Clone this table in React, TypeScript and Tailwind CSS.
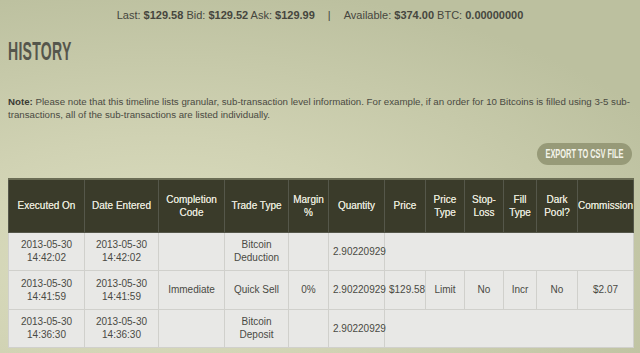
const cols = [76, 74, 66, 64, 40, 56, 41, 39, 39, 33, 41, 56]

const headers = [
  'Executed On',
  'Date Entered',
  'Completion Code',
  'Trade Type',
  'Margin %',
  'Quantity',
  'Price',
  'Price Type',
  'Stop-Loss',
  'Fill Type',
  'Dark Pool?',
  'Commission',
]

const td = 'border border-[#d0d0cc] px-1 text-center align-middle'

const App = () => {
  return (
    <div
      className="h-[353px] w-[640px] overflow-hidden bg-[radial-gradient(ellipse_90%_80%_at_25%_75%,#dddfc1_0%,#d0d2b3_45%,#bcc09f_100%)] text-[#3f3f38]"
      style={{ fontFamily: '"Liberation Sans", Arial, sans-serif' }}
    >
      {/* ticker */}
      <div className="flex h-[30px] items-center justify-center pt-[1px] text-[11px] text-[#46463e]">
        <span>
          Last: <b>$129.58</b> Bid: <b>$129.52</b> Ask: <b>$129.99</b>
        </span>
        <span className="mx-[13px]">|</span>
        <span>
          Available: <b>$374.00</b> BTC: <b>0.00000000</b>
        </span>
      </div>

      <div className="px-[8px]">
        <h1 className="mt-[6px] h-[30px] text-[26px] leading-[30px] font-bold text-[#55564c]">
          <span className="inline-block origin-left scale-x-[0.54] tracking-[0.5px]">HISTORY</span>
        </h1>

        <p className="mt-[29px] text-[9.7px] leading-[13px] text-[#4a4a42]">
          <b className="text-[#3a3a34]">Note:</b> Please note that this timeline lists granular, sub-transaction level information. For example, if an order for 10 Bitcoins is filled using 3-5 sub-transactions, all of the sub-transactions are listed individually.
        </p>

        <div className="mt-[22px] flex justify-end">
          <button className="flex h-[22px] w-[95px] items-center justify-center overflow-hidden rounded-full bg-[#979a78] text-[13px] font-bold text-[#f4f4ea]">
            <span className="inline-block scale-x-[0.57] whitespace-nowrap">EXPORT TO CSV FILE</span>
          </button>
        </div>

        <table className="mt-[13px] w-[625px] table-fixed border-collapse border border-[#b8b9a8] text-[10px] leading-[13px]">
          <colgroup>
            {cols.map((w, i) => (
              <col key={i} style={{ width: w }} />
            ))}
          </colgroup>
          <thead>
            <tr className="h-[53px] border-t-2 border-[#6b6d55] bg-[#3a3b2a] text-[#e4e4d8]">
              {headers.map((h) => (
                <th key={h} className="border border-[#55574a] px-0 text-center font-normal [text-shadow:0_0_0.3px_#e4e4d8]">
                  {h}
                </th>
              ))}
            </tr>
          </thead>
          <tbody className="bg-[#e8e8e6] text-[#4a4a44]">
            <tr className="h-[38px]">
              <td className={td}>2013-05-30<br />14:42:02</td>
              <td className={td}>2013-05-30<br />14:42:02</td>
              <td className={td}></td>
              <td className={td}>Bitcoin<br />Deduction</td>
              <td className={td}></td>
              <td className={td + ' px-0'}>2.90220929</td>
              <td className={td} colSpan={6}></td>
            </tr>
            <tr className="h-[39px]">
              <td className={td}>2013-05-30<br />14:41:59</td>
              <td className={td}>2013-05-30<br />14:41:59</td>
              <td className={td}>Immediate</td>
              <td className={td}>Quick Sell</td>
              <td className={td}>0%</td>
              <td className={td + ' px-0'}>2.90220929</td>
              <td className={td + ' px-0'}>$129.58</td>
              <td className={td}>Limit</td>
              <td className={td}>No</td>
              <td className={td}>Incr</td>
              <td className={td}>No</td>
              <td className={td}>$2.07</td>
            </tr>
            <tr className="h-[38px]">
              <td className={td}>2013-05-30<br />14:36:30</td>
              <td className={td}>2013-05-30<br />14:36:30</td>
              <td className={td}></td>
              <td className={td}>Bitcoin<br />Deposit</td>
              <td className={td}></td>
              <td className={td + ' px-0'}>2.90220929</td>
              <td className={td} colSpan={6}></td>
            </tr>
          </tbody>
        </table>
      </div>
    </div>
  )
}

export default App
